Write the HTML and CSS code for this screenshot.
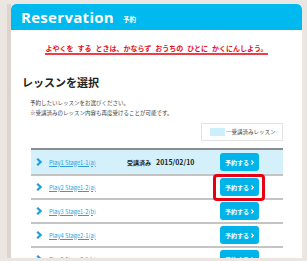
FILE: index.html
```html
<!DOCTYPE html>
<html lang="ja">
<head>
  <meta charset="UTF-8">
  <title>Reservation</title>
  <link rel="stylesheet" href="styles.css">
</head>
<body>
  <div class="frame">
    <div class="card">
      <div class="head">
        <span class="title">Reservation</span>
        <span class="sub">予約</span>
      </div>

      <p class="notice"><span>よやくを する ときは、かならず おうちの ひとに かくにんしよう。</span></p>

      <h2>レッスンを選択</h2>
      <p class="lead">予約したいレッスンをお選びください。<br>※受講済みのレッスン内容も再度受けることが可能です。</p>

      <div class="legend-row">
        <div class="legend"><span class="swatch"></span>…受講済みレッスン</div>
      </div>

      <ul class="lessons">
        <li class="row done">
          <svg class="chev" width="6" height="8" viewBox="0 0 6 8"><path d="M1.2 0.8 L4.6 4 L1.2 7.2" /></svg>
          <a class="name" href="#">Play1 Stage1-1(a)</a>
          <span class="status">受講済み<span class="date">2015/02/10</span></span>
          <a class="btn" href="#">予約する<svg width="3" height="5" viewBox="0 0 3 5"><path d="M0.5 0.5 L2.3 2.5 L0.5 4.5" /></svg></a>
        </li>
        <li class="row">
          <svg class="chev" width="6" height="8" viewBox="0 0 6 8"><path d="M1.2 0.8 L4.6 4 L1.2 7.2" /></svg>
          <a class="name" href="#">Play2 Stage1-2(a)</a>
          <a class="btn pick" href="#">予約する<svg width="3" height="5" viewBox="0 0 3 5"><path d="M0.5 0.5 L2.3 2.5 L0.5 4.5" /></svg></a>
        </li>
        <li class="row">
          <svg class="chev" width="6" height="8" viewBox="0 0 6 8"><path d="M1.2 0.8 L4.6 4 L1.2 7.2" /></svg>
          <a class="name" href="#">Play3 Stage1-2(b)</a>
          <a class="btn" href="#">予約する<svg width="3" height="5" viewBox="0 0 3 5"><path d="M0.5 0.5 L2.3 2.5 L0.5 4.5" /></svg></a>
        </li>
        <li class="row">
          <svg class="chev" width="6" height="8" viewBox="0 0 6 8"><path d="M1.2 0.8 L4.6 4 L1.2 7.2" /></svg>
          <a class="name" href="#">Play4 Stage2-1(a)</a>
          <a class="btn" href="#">予約する<svg width="3" height="5" viewBox="0 0 3 5"><path d="M0.5 0.5 L2.3 2.5 L0.5 4.5" /></svg></a>
        </li>
        <li class="row">
          <svg class="chev" width="6" height="8" viewBox="0 0 6 8"><path d="M1.2 0.8 L4.6 4 L1.2 7.2" /></svg>
          <a class="name" href="#">Play5 Stage2-1(b)</a>
          <a class="btn" href="#">予約する<svg width="3" height="5" viewBox="0 0 3 5"><path d="M0.5 0.5 L2.3 2.5 L0.5 4.5" /></svg></a>
        </li>
      </ul>
    </div>
  </div>
</body>
</html>
```

FILE: styles.css
```css
body {
  margin: 0;
  padding-top: 4px;
  background-color: #ebe6e2;
  font-family: "Noto Sans CJK JP", "Noto Sans", sans-serif;
}

.frame {
  margin: 0 5px 0 7px;
  border-left: 4px solid #dcd4cd;
}

.card {
  background-color: #fff;
  height: 254px;
  overflow: hidden;
  border-radius: 5px 5px 0 0;
}

.head {
  height: 26px;
  background-color: #00b9ef;
  border-radius: 5px 5px 0 0;
  display: flex;
  align-items: center;
  padding-left: 10px;
  color: #fff;
}

.title {
  font-family: "Open Sans", sans-serif;
  font-weight: 700;
  font-size: 15px;
  letter-spacing: 0.3px;
}

.sub {
  font-size: 6.5px;
  font-weight: 700;
  margin: 4px 0 0 9px;
}

.notice {
  margin: 0;
  padding-top: 13px;
  text-align: center;
  font-size: 7px;
  word-spacing: 2.4px;
  font-weight: 700;
  line-height: 10px;
  color: #e8101c;
}

.notice span {
  display: inline-block;
  border-bottom: 2px solid #f03c48;
}

h2 {
  margin: 20px 0 0 11px;
  font-size: 11px;
  line-height: 14px;
  font-weight: 700;
  color: #222;
}

.lead {
  margin: 10px 0 0 19px;
  font-size: 5.5px;
  line-height: 9.5px;
  color: #444;
}

.legend-row {
  display: flex;
  justify-content: flex-end;
  margin: 5px 19px 0 0;
}

.legend {
  box-sizing: border-box;
  width: 82px;
  height: 18px;
  border: 1px solid #e3e3e3;
  display: flex;
  align-items: center;
  padding-left: 8px;
  font-size: 5.5px;
  color: #444;
}

.swatch {
  width: 15px;
  height: 8px;
  background-color: #ccf0fb;
  margin-right: 1px;
}

.lessons {
  list-style: none;
  margin: 7px 19px 0 20px;
  padding: 0;
  border-top: 2px solid #8c8c8c;
}

.row {
  display: flex;
  align-items: center;
  height: 22px;
  border-bottom: 2px solid #c4c4c4;
  padding: 0 24px 0 5px;
}

.row.done {
  height: 24px;
  background-color: #d4f1fb;
}

.chev path {
  fill: none;
  stroke: #1aa0dc;
  stroke-width: 2.2;
}

.name {
  width: 78px;
  margin-left: 7px;
  font-size: 5.8px;
  color: #2f9fd8;
  text-decoration: underline;
}

.status {
  font-size: 6px;
  font-weight: 700;
  color: #222;
}

.date {
  font-size: 7px;
  margin-left: 5px;
}

.btn {
  margin-left: auto;
  width: 39px;
  height: 18px;
  background-color: #00b4ea;
  border-radius: 3px;
  color: #fff;
  font-size: 6px;
  font-weight: 700;
  text-decoration: none;
  display: flex;
  align-items: center;
  justify-content: center;
  gap: 2px;
}

.btn path {
  fill: none;
  stroke: #fff;
  stroke-width: 1.2;
}

.pick {
  position: relative;
}

.pick::after {
  content: "";
  position: absolute;
  top: -4px;
  right: -6px;
  bottom: -5px;
  left: -7px;
  border: 3px solid #e60012;
  border-radius: 4px;
}
```
